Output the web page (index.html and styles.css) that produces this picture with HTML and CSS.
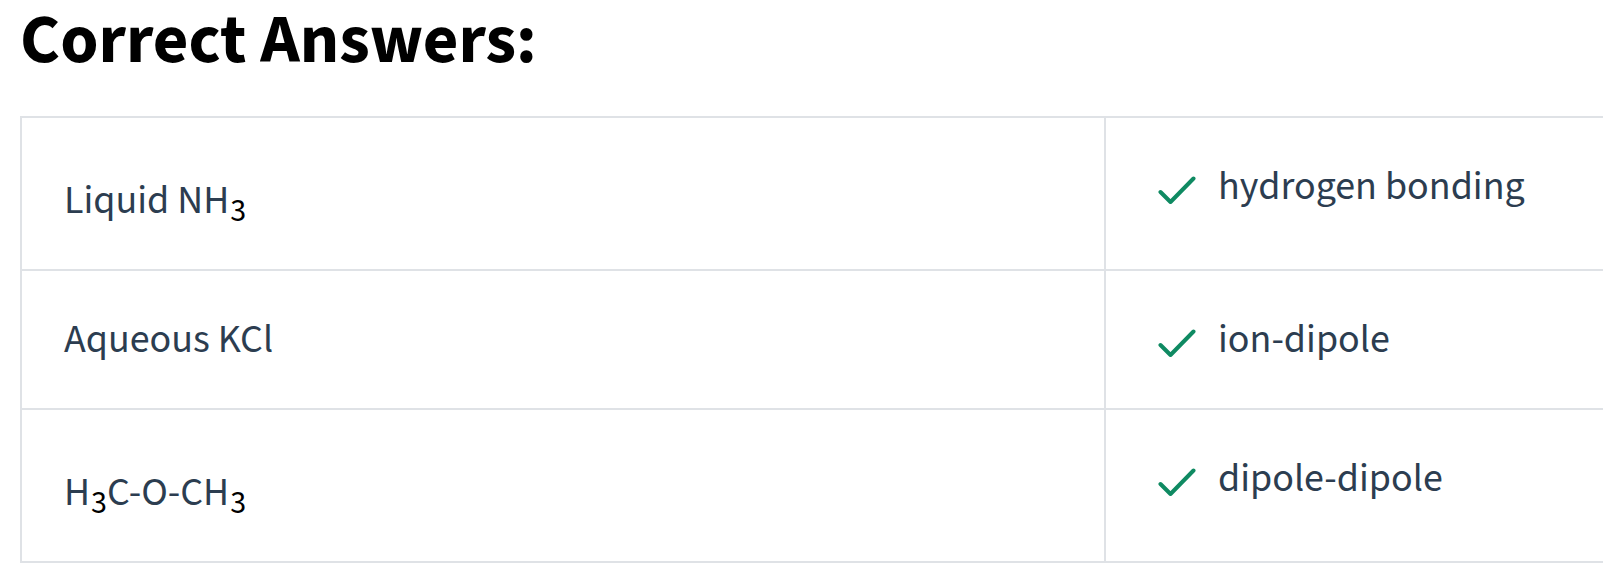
FILE: index.html
```html
<!DOCTYPE html>
<html lang="en">
<head>
<meta charset="utf-8">
<title>Correct Answers</title>
<link rel="stylesheet" href="styles.css">
</head>
<body>
<main class="page">
  <h2 class="title">Correct Answers:</h2>
  <table class="answers">
    <colgroup><col class="col-term"><col class="col-answer"></colgroup>
    <tbody>
      <tr>
        <td class="term term-formula">Liquid NH<span class="sub">3</span></td>
        <td class="answer">
          <div class="answer-line">
            <svg class="check" viewBox="0 0 38 28" width="38" height="28" aria-hidden="true"><path d="M2.5 16 L12.5 26 L35.5 2.5"/></svg>
            <span>hydrogen bonding</span>
          </div>
        </td>
      </tr>
      <tr>
        <td class="term">Aqueous KCl</td>
        <td class="answer">
          <div class="answer-line">
            <svg class="check" viewBox="0 0 38 28" width="38" height="28" aria-hidden="true"><path d="M2.5 16 L12.5 26 L35.5 2.5"/></svg>
            <span>ion-dipole</span>
          </div>
        </td>
      </tr>
      <tr>
        <td class="term term-formula">H<span class="sub">3</span>C-O-CH<span class="sub">3</span></td>
        <td class="answer">
          <div class="answer-line">
            <svg class="check" viewBox="0 0 38 28" width="38" height="28" aria-hidden="true"><path d="M2.5 16 L12.5 26 L35.5 2.5"/></svg>
            <span>dipole-dipole</span>
          </div>
        </td>
      </tr>
    </tbody>
  </table>
</main>
</body>
</html>
```
FILE: styles.css
```css
html, body {
  margin: 0;
  padding: 0;
  background: #ffffff;
  overflow: hidden;
}

body {
  font-family: "Source Sans 3", "Source Sans Pro", Lato, "Liberation Sans", sans-serif;
  color: #2c3d50;
}

.page {
  padding: 0 0 0 20px;
}

.title {
  margin: 0;
  font-size: 69px;
  line-height: 82px;
  font-weight: 700;
  color: #000000;
}

.answers {
  margin-top: 34px;
  border-collapse: collapse;
  table-layout: fixed;
  width: 2168px;
  font-size: 40px;
  line-height: 57px;
}

.col-term,
.col-answer {
  width: 1084px;
}

.answers td {
  border: 2px solid #dfe2e6;
  vertical-align: top;
  padding: 40px 0 40px 0;
}

.term {
  padding-left: 42px !important;
  white-space: nowrap;
}

.term-formula {
  padding-top: 54px !important;
}

.sub {
  font-size: 32px;
  line-height: 0;
  vertical-align: -8px;
  color: #000000;
  margin-left: 1px;
}

.answer {
  padding-left: 52px !important;
}

.answer-line {
  display: flex;
  align-items: flex-start;
  gap: 22px;
}

.check {
  flex: none;
  margin-top: 18px;
}

.check path {
  fill: none;
  stroke: #0f8a62;
  stroke-width: 4;
  stroke-linecap: round;
  stroke-linejoin: round;
}
```
